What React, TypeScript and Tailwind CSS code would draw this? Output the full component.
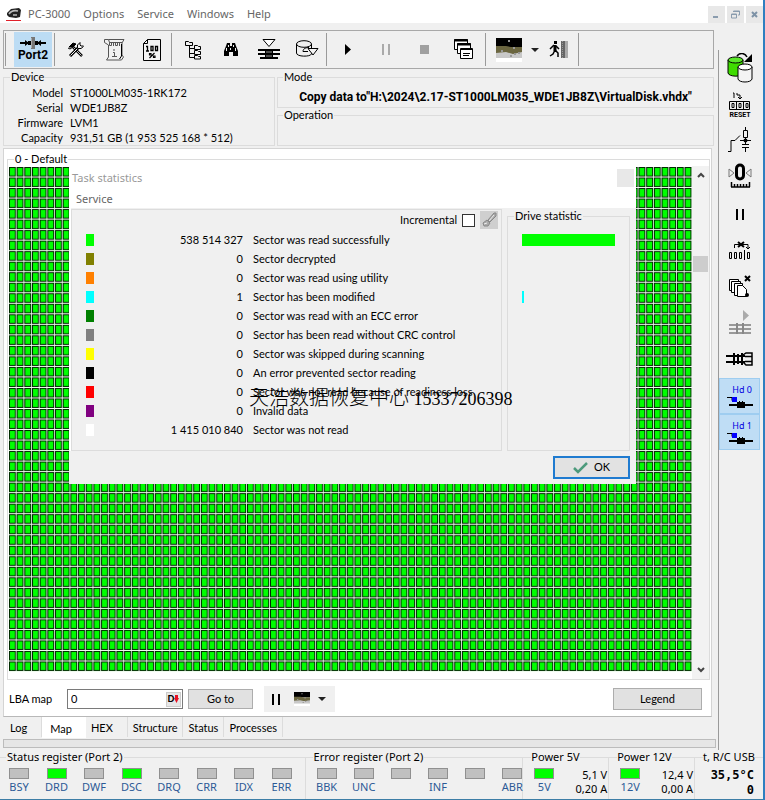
import type { ReactNode } from 'react';

// ============================================================
// PC-3000 — main window with sector map and task statistics
// ============================================================

interface SectorStat {
  color: string;
  count: string;
  label: string;
  bar: number;
}

const SECTOR_STATS: SectorStat[] = [
  { color: 'bg-[#00ff00]', count: '538 514 327', label: 'Sector was read successfully', bar: 93 },
  { color: 'bg-[#808000]', count: '0', label: 'Sector decrypted', bar: 0 },
  { color: 'bg-[#ff8000]', count: '0', label: 'Sector was read using utility', bar: 0 },
  { color: 'bg-[#00ffff]', count: '1', label: 'Sector has been modified', bar: 2 },
  { color: 'bg-[#008000]', count: '0', label: 'Sector was read with an ECC error', bar: 0 },
  { color: 'bg-[#808080]', count: '0', label: 'Sector has been read without CRC control', bar: 0 },
  { color: 'bg-[#ffff00]', count: '0', label: 'Sector was skipped during scanning', bar: 0 },
  { color: 'bg-black', count: '0', label: 'An error prevented sector reading', bar: 0 },
  { color: 'bg-[#ff0000]', count: '0', label: 'Sector was not read because of readiness loss', bar: 0 },
  { color: 'bg-[#800080]', count: '0', label: 'Invalid data', bar: 0 },
  { color: 'bg-white', count: '1 415 010 840', label: 'Sector was not read', bar: 0 },
];

const DEVICE = [
  ['Model', 'ST1000LM035-1RK172'],
  ['Serial', 'WDE1JB8Z'],
  ['Firmware', 'LVM1'],
  ['Capacity', '931,51 GB (1 953 525 168 * 512)'],
];

const STATUS_BITS = ['BSY', 'DRD', 'DWF', 'DSC', 'DRQ', 'CRR', 'IDX', 'ERR'];
const ERROR_BITS = ['BBK', 'UNC', '', 'INF', '', 'ABR'];
const ACTIVE_BITS = ['DRD', 'DSC'];
const TABS = ['Log', 'Map', 'HEX', 'Structure', 'Status', 'Processes'];

// ---------- Icons ----------

function Icon({ w, h, children }: { w: number; h: number; children: ReactNode }) {
  return (
    <svg width={w} height={h} viewBox={`0 0 ${w} ${h}`} fill="none" stroke="#000" className="block shrink-0" aria-hidden="true">
      {children}
    </svg>
  );
}

const LogoIcon = () => (
  <Icon w={16} h={15}>
    <path d="M1 6 5 2l8-1 2 2-1 7-4 1-7-1-2-2z" fill="#222" stroke="none" />
    <path d="M3 7c2-3 5-4 9-3M7 8h4" stroke="#bbb" strokeWidth="1.500" />
    <path d="M0 13.500h15" stroke="#e0202a" />
  </Icon>
);

const PortIcon = () => (
  <Icon w={26} h={12}>
    <path d="M0 6h26" strokeWidth="2" />
    <path d="M5 3l4 3-4 3zM21 3l-4 3 4 3z" fill="#000" stroke="none" />
    <path d="M8 6h4M14 6h4" strokeWidth="4" />
    <path d="M11 0h4v12h-4z" fill="#777" stroke="none" />
    <path d="M11.500 1v10" stroke="#aaa" />
  </Icon>
);

const ToolsIcon = () => (
  <Icon w={16} h={15}>
    <path d="M1 5l4-4 3 1-3 3z" fill="#000" />
    <path d="M0 6l2 1 3-2" />
    <path d="M5 5l9 9" strokeWidth="2.500" />
    <path d="M5.500 5.500l8 8" stroke="#f0f0f0" strokeWidth=".8" />
    <path d="M10 6L2 14" strokeWidth="3" />
    <path d="M10 6L2.500 13.500" stroke="#f0f0f0" />
    <path d="M12 .5L9.500 3v3.500H13l2.500-2M12 .5V3l1 1h2.500" />
  </Icon>
);

const ScriptIcon = () => (
  <Icon w={21} h={23}>
    <path d="M4.500 1.500H20l-2 3.500v12l1.500 2-2 3H2.500l2-3V7L.5 4.500v-3h4l1 3H18" fill="#f0f0f0" stroke="#555" />
    <path d="M17.500 6v12l-2 3" />
    <path d="M5.500 4.500h2v3h-2zM11.500 4.500h2v3h-2zM9.500 4v4M15.500 4v4M10 11v2M9 14.500h1.500v4M8 18.500h5" stroke="#555" />
  </Icon>
);

const PercentIcon = () => (
  <Icon w={18} h={22}>
    <path d="M4.500.5h13v21H.5v-17z" fill="#f4f4f4" />
    <path d="M.5 4.500h4v-4" />
    <path d="M3 7.500h1.500V12M3 12h3M8 7.500h2v4H8zM12.500 7.500h2v4h-2z" strokeWidth="1.300" />
    <path d="M11.500 14l-5 5M6.500 14.500H8V16H6.500zM10.500 17H12v1.500h-1.500z" strokeWidth="1.200" />
  </Icon>
);

const TreeIcon = () => (
  <Icon w={17} h={20}>
    <path d="M.5 1.500h3l1 1h3v3h-7zM9.500 5.500h3l1 1h2v3h-6zM9.500 10.500h3l1 1h2v3h-6zM9.500 15.500h3l1 1h2v2.500h-6z" />
    <path d="M4.500 6v11.500h5M4.500 8.500h5M4.500 13.500h5" />
  </Icon>
);

const BinocularsIcon = () => (
  <Icon w={16} h={13}>
    <path d="M4 0h3v3h2V0h3l1 3 2 5v5h-5V9H6v4H1V8l2-5z" fill="#000" stroke="none" />
    <path d="M3.500 5v3M12.500 5v3M5.500 2v2M10.500 2v2M7.500 5v2" stroke="#eee" />
  </Icon>
);

const HeadsIcon = () => (
  <Icon w={22} h={21}>
    <path d="M5 .5h12l-6 7z" fill="#fff" />
    <path d="M0 11h22M0 15h22M2 19h18" strokeWidth="2" />
    <path d="M7 10h8v10H7z" fill="#000" stroke="none" />
    <path d="M8 13h6M8 17h6" stroke="#999" />
  </Icon>
);

const DiskArrowIcon = () => (
  <Icon w={23} h={19}>
    <path d="M.5 4v9c0 4 14 4 15 1V4" />
    <ellipse cx="8" cy="4" rx="7.500" ry="3.300" />
    <path d="M7 11.500c0-3 3-4 6-4M7 11.500h5" />
    <path d="M12 8.500h10l-5 6.500z" fill="#f4f4f4" />
  </Icon>
);

const CascadeIcon = () => (
  <Icon w={20} h={21}>
    <path d="M.5.5h13v10H.5z" fill="#fff" />
    <path d="M0 1.500h14" strokeWidth="2" />
    <path d="M3.500 4.500h13v10h-13z" fill="#fff" />
    <path d="M3 5.500h14" strokeWidth="2" />
    <path d="M6.500 9.500h12v10h-12z" fill="#fff" />
    <path d="M6 10.500h13M9 14.500h7M9 16.500h6" />
  </Icon>
);

const SceneIcon = ({ size = 26 }: { size?: number }) => (
  <svg width={size} height={size - 2} viewBox="0 0 26 24" preserveAspectRatio="none" className="block shrink-0" aria-hidden="true">
    <path d="M0 0h26v9H0z" fill="#000" />
    <path d="M0 8h10l5 1h11v7H0z" fill="#6b6640" />
    <path d="M0 15l10-1 7 2 9-2v6H0z" fill="#c8c8c8" />
    <path d="M0 20h26v4H0z" fill="#fff" />
    <path d="M12 2h2v2h-2zM5 12h2v2H5zM18 15h2v2h-2zM22 14h2v2h-2zM14 17h2v2h-2zM17 9h2v2h-2z" fill="#999" />
  </svg>
);

const ExitIcon = () => (
  <Icon w={20} h={17}>
    <path d="M5 0h3v3H5z" fill="#000" stroke="none" />
    <path d="M6 4v6" strokeWidth="3" />
    <path d="M5 4l-4 4M7 5l3 3M6 9l-2 4-3 2M6 9l3 3v4" strokeWidth="1.500" />
    <path d="M12 0h4v17h-4z" fill="#666" stroke="none" />
    <path d="M16 0h3v17h-3z" fill="#aaa" stroke="none" />
    <path d="M13.500 0v17" strokeDasharray="1 1" stroke="#999" />
  </Icon>
);

const Caret = () => (
  <Icon w={8} h={4}>
    <path d="M0 0h8L4 4z" fill="#222" stroke="none" />
  </Icon>
);

const PauseIcon = ({ color = '#000' }: { color?: string }) => (
  <Icon w={8} h={11}>
    <path d="M1 0v11M7 0v11" stroke={color} strokeWidth="2" />
  </Icon>
);

const CopyDisksIcon = () => (
  <Icon w={26} h={30}>
    <path d="M1 7v13c1 4 13 4 15 1V7" fill="#3fdc00" />
    <ellipse cx="8.500" cy="7" rx="7.500" ry="3" fill="#5be82a" />
    <path d="M10 3c3-4 8-3 10 1" strokeWidth="1.500" />
    <path d="M25 1v8h-8z" fill="#000" stroke="none" />
    <path d="M11 14v12c1 4 13 4 14 0V14" fill="#f4f4f4" />
    <ellipse cx="18" cy="14" rx="7" ry="3" fill="#fff" />
  </Icon>
);

const ResetIcon = () => (
  <Icon w={22} h={27}>
    <path d="M4 2h1v5M8 2v2h3v4M9 6l2 2 2-2" />
    <path d="M.5 10.500h20v8H.5zM7.500 10v9M14.500 10v9" />
    <path d="M3 12.500h2v4H3zM10 12.500h2v4h-2zM17 12.500h2v4h-2z" />
    <text x="11" y="26" textAnchor="middle" fontSize="7" fontWeight="700" fontFamily="Roboto, sans-serif" fill="#000" stroke="none">RESET</text>
  </Icon>
);

const SwitchIcon = () => (
  <Icon w={24} h={26}>
    <path d="M0 24.500h3V13.500h4l5-5M12 13.500h11M17.500 0v3M15.500 3.500h4v7h-4zM17.500 11v6M14 17.500h7M14 20.500h7M17.500 21v4" />
    <circle cx="17.500" cy="13.500" r="2" fill="#000" stroke="none" />
  </Icon>
);

const RulerIcon = () => (
  <Icon w={24} h={26}>
    <path d="M1 6l5 4-5 4zM23 6l-5 4 5 4z" stroke="#777" />
    <rect x="8.500" y="2" width="7" height="14" rx="3.500" strokeWidth="3" />
    <path d="M3 24h19M3.500 19v5M6.500 21v3M9.500 21v3M12.500 21v3M15.500 21v3M18.500 21v3M21.500 19v5" strokeWidth="1.500" />
  </Icon>
);

const SkipIcon = () => (
  <Icon w={23} h={19}>
    <path d="M6.500 7V3.500H20V8M18 6l2 2 2-2" />
    <path d="M10 1l6 5M16 1l-6 5" strokeWidth="2" />
    <path d="M1.500 11.500h2v6h-2zM6.500 11.500h2v6h-2zM11.500 11.500h2v6h-2zM16.500 9v10M19.500 11.500h2v6h-2z" />
  </Icon>
);

const PagesIcon = () => (
  <Icon w={22} h={23}>
    <path d="M.5 4.500h9v11h-9z" fill="#fff" />
    <path d="M2.500 6.500h9v11h-9z" fill="#fff" />
    <path d="M5.500 8.500h8v12h-8z" fill="#fff" />
    <path d="M8.500 10.500h5l4 4v7h-9z" fill="#fff" />
    <path d="M16 1l5 5M21 1l-5 5" strokeWidth="2" />
    <circle cx="18" cy="20" r="2" fill="#000" stroke="none" />
  </Icon>
);

const PlayHeadsIcon = () => (
  <Icon w={22} h={26}>
    <path d="M14 1v11l6-5.500z" fill="#aaa" stroke="none" />
    <path d="M0 16h22M0 20h22M0 24h22" stroke="#999" strokeWidth="2" />
    <path d="M7 14h2v11H7zM13 14h2v11h-2z" fill="#888" stroke="none" />
  </Icon>
);

const HeadStackIcon = () => (
  <Icon w={27} h={15}>
    <path d="M0 5h19M0 11h19" strokeWidth="2" />
    <path d="M8 2v12M12 3v10M16 2v12" strokeWidth="2" />
    <path d="M17 4l3-2h6v12h-6l-3-3M19 5.500h7M19 10.500h7" strokeWidth="1.500" />
  </Icon>
);

const HdIcon = () => (
  <Icon w={26} h={12}>
    <path d="M0 1.500h5v3" />
    <path d="M5 1h5v5H5z" fill="#0000ff" stroke="none" />
    <path d="M2 9h24" strokeWidth="2" />
    <path d="M10 6h8v6h-8z" fill="#000" stroke="none" />
    <path d="M12.500 5v7M15.500 5v7" />
  </Icon>
);

// ---------- Small shared parts ----------

function ToolButton({ label, width = 'w-[38px]', children }: { label: string; width?: string; children: ReactNode }) {
  return (
    <button type="button" aria-label={label} className={`flex ${width} items-center justify-center`}>
      {children}
    </button>
  );
}

const Separator = () => <div className="my-[2px] mr-[2px] w-px bg-[#9a9a9a]" />;

function Led({ label, on }: { label: string; on: boolean }) {
  return (
    <div className="flex w-5 flex-col items-center">
      <div className={`h-[11px] w-5 border border-[#909090] ${on ? 'bg-[#00ff00]' : 'bg-[#c0c0c0]'}`} />
      <span className="mt-px h-[14px] leading-[14px] text-[#2c5a96]">{label}</span>
    </div>
  );
}

function PowerGroup({ name, label, volts, amps }: { name: string; label: string; volts: string; amps: string }) {
  return (
    <fieldset className="min-w-0 border-t border-r border-[#dcdcdc]">
      <legend className="ml-[8px] h-[14px] leading-[14px] whitespace-nowrap">{name}</legend>
      <div className="flex justify-between pt-[4px] pr-px pl-[11px]">
        <Led label={label} on />
        <div className="text-right leading-[14px]">
          <div>{volts}</div>
          <div>{amps}</div>
        </div>
      </div>
    </fieldset>
  );
}

// ---------- Sections ----------

function MenuBar() {
  return (
    <header className="flex h-[23px] items-end justify-between bg-white font-['Noto_Sans',sans-serif] text-[11px] text-[#666]">
      <nav className="flex items-center gap-[13px] pl-[6px] leading-[18px]">
        <div className="flex items-center gap-[6px]">
          <LogoIcon />
          <span>PC-3000</span>
        </div>
        {['Options', 'Service', 'Windows', 'Help'].map(item => (
          <button key={item} type="button">{item}</button>
        ))}
      </nav>
      <div className="flex gap-[2px] text-[#7d92a6]">
        <button type="button" aria-label="Minimize" className="flex h-[17px] w-[17px] items-center justify-center bg-[#e8e8e8]">
          <Icon w={9} h={9}><path d="M1 7h5" stroke="#8a9cae" strokeWidth="2" /></Icon>
        </button>
        <button type="button" aria-label="Restore" className="flex h-[17px] w-[17px] items-center justify-center bg-[#e8e8e8]">
          <Icon w={9} h={9}><path d="M2.500 2V1h6v4H7M.5 4h5v4h-5zM2 1.500h6M.5 4.500h5" stroke="#8a9cae" /></Icon>
        </button>
        <button type="button" aria-label="Close" className="flex h-[17px] w-[17px] items-center justify-center bg-[#e8e8e8]">
          <Icon w={9} h={9}><path d="M2 2l5 5M7 2l-5 5" stroke="#7d92a6" strokeWidth="2" /></Icon>
        </button>
      </div>
    </header>
  );
}

function Toolbar() {
  return (
    <div className="mr-[4px] ml-[3px] flex h-[39px] border border-[#a8a8a8] pl-px" role="toolbar">
      <Separator />
      <button type="button" className="my-px mr-[2px] ml-[6px] flex w-[38px] flex-col items-center justify-center bg-[#bcdcf4] font-[Roboto,sans-serif] text-[12px] leading-[13px] font-bold">
        <PortIcon />
        Port2
      </button>
      <Separator />
      <ToolButton label="Settings"><ToolsIcon /></ToolButton>
      <ToolButton label="Script"><ScriptIcon /></ToolButton>
      <ToolButton label="Progress"><PercentIcon /></ToolButton>
      <Separator />
      <ToolButton label="Tree"><TreeIcon /></ToolButton>
      <ToolButton label="Search"><BinocularsIcon /></ToolButton>
      <ToolButton label="Heads"><HeadsIcon /></ToolButton>
      <ToolButton label="Disk"><DiskArrowIcon /></ToolButton>
      <Separator />
      <ToolButton label="Start">
        <Icon w={8} h={11}><path d="M1 0l6 5.500L1 11z" fill="#000" stroke="none" /></Icon>
      </ToolButton>
      <ToolButton label="Pause"><PauseIcon color="#aaa" /></ToolButton>
      <ToolButton label="Stop">
        <Icon w={9} h={9}><path d="M0 0h9v9H0z" fill="#a0a0a0" stroke="none" /></Icon>
      </ToolButton>
      <ToolButton label="Windows" width="w-[42px]"><CascadeIcon /></ToolButton>
      <Separator />
      <ToolButton label="Map view" width="w-[42px]"><SceneIcon /></ToolButton>
      <ToolButton label="Map view options" width="w-[10px]"><Caret /></ToolButton>
      <ToolButton label="Exit"><ExitIcon /></ToolButton>
      <Separator />
    </div>
  );
}

function InfoPanel() {
  return (
    <div className="mt-px mr-[4px] ml-[3px] flex h-[76px] gap-[2px]">
      <fieldset className="w-[272px] min-w-0 border border-[#dcdcdc]">
        <legend className="ml-[6px] h-[14px] px-px leading-[14px]">Device</legend>
        <dl className="grid grid-cols-[59px_1fr] gap-x-[7px] pt-px leading-[15px] whitespace-nowrap">
          {DEVICE.map(([name, value]) => (
            <div key={name} className="contents">
              <dt className="text-right">{name}</dt>
              <dd>{value}</dd>
            </div>
          ))}
        </dl>
      </fieldset>
      <div className="flex min-w-0 flex-1 flex-col">
        <fieldset className="h-[38px] min-w-0 border border-[#dcdcdc]">
          <legend className="ml-[5px] h-[14px] px-px leading-[14px]">Mode</legend>
          <p className="pt-[4px] text-center font-[Roboto,sans-serif] text-[12px] leading-[18px] font-bold whitespace-nowrap">
            Copy data to"H:\2024\2.17-ST1000LM035_WDE1JB8Z\VirtualDisk.vhdx"
          </p>
        </fieldset>
        <fieldset className="min-w-0 flex-1 border border-[#dcdcdc]">
          <legend className="ml-[5px] h-[14px] px-px leading-[14px]">Operation</legend>
        </fieldset>
      </div>
    </div>
  );
}

// Every cell stands for one block of sectors
function SectorMap() {
  return (
    <svg viewBox="0 0 685 504" preserveAspectRatio="none" className="block min-h-[505px] w-full flex-1" role="img" aria-label="Sector map">
      <defs>
        <pattern id="cell" width="7.700" height="10.500" patternUnits="userSpaceOnUse">
          <rect width="7.700" height="10.500" fill="#f4fff4" />
          <rect width="6.900" height="9.500" fill="#002800" />
          <rect x="1" y="1" width="4.900" height="7.500" fill="#00ff00" />
        </pattern>
      </defs>
      <rect width="685" height="504" fill="url(#cell)" />
    </svg>
  );
}

function TaskStatistics() {
  return (
    <div role="dialog" aria-label="Task statistics" className="absolute top-0 right-[56px] left-[60px] bg-[#f0f0f0]">
      <div className="flex h-6 items-center justify-between bg-white pl-[3px] font-['Noto_Sans',sans-serif] text-[11px] text-[#999]">
        <span>Task statistics</span>
        <button type="button" aria-label="Close" className="mr-[2px] h-[18px] w-[17px] bg-[#e8e8e8]" />
      </div>
      <div className="h-[18px] bg-white pl-[7px] font-['Noto_Sans',sans-serif] text-[11px] leading-[18px] text-[#666]">
        <button type="button">Service</button>
      </div>
      <div className="flex h-[243px] gap-[5px] border-l-2 border-white pt-px pr-[6px]">
        <div className="min-w-0 flex-1 border border-[#dcdcdc]">
          <div className="flex h-5 items-center justify-end gap-[5px] pr-[3px]">
            <label htmlFor="incremental">Incremental</label>
            <input id="incremental" type="checkbox" className="h-[13px] w-[13px] appearance-none border border-[#333] bg-white" />
            <button type="button" aria-label="Clear" className="flex h-[18px] w-[18px] items-center justify-center bg-[#cfcfcf]">
              <Icon w={16} h={16}>
                <path d="M15 1h-2L7 8l2 2 6-6zM6 8l-4 3 1 3h4l2-3z" fill="#aaa" stroke="#888" />
                <path d="M8 9l5-6M3 12l3-1" stroke="#eee" />
              </Icon>
            </button>
          </div>
          <table className="w-full">
            <tbody>
              {SECTOR_STATS.map(stat => (
                <tr key={stat.label} className="h-[19px] leading-[19px] whitespace-nowrap">
                  <td className="w-[30px] pl-[14px]">
                    <div className={`h-3 w-2 ${stat.color}`} />
                  </td>
                  <td className="w-[151px] pr-[10px] text-right">{stat.count}</td>
                  <td>{stat.label}</td>
                </tr>
              ))}
            </tbody>
          </table>
        </div>
        <fieldset className="w-[123px] min-w-0 border border-[#dcdcdc]">
          <legend className="ml-[6px] h-[14px] px-px leading-[14px]">Drive statistic</legend>
          <div className="pt-[7px] pl-[14px]">
            {SECTOR_STATS.map(stat => (
              <div key={stat.label} className="flex h-[19px] items-center">
                <div className={`h-3 ${stat.color}`} style={{ width: stat.bar }} />
              </div>
            ))}
          </div>
        </fieldset>
      </div>
      <div className="flex justify-end pt-[5px] pr-[6px] pb-[5px]">
        <button type="button" className="flex h-[23px] w-[77px] items-center justify-center gap-[6px] border-2 border-[#1f7bd0] bg-[#e2e2e2]">
          <Icon w={15} h={12}>
            <path d="M1 6l4 4 9-9" stroke="#4d9a7c" strokeWidth="2.500" />
          </Icon>
          OK
        </button>
      </div>
    </div>
  );
}

function MapPanel() {
  return (
    <section className="mt-[2px] mr-[6px] ml-[3px] flex flex-1 flex-col border border-[#d4d4d4] border-b-[#b8b8b8] bg-white pt-[3px]">
      <fieldset className="mr-px ml-[3px] flex min-w-0 flex-1 flex-col border border-[#dcdcdc] pl-px">
        <legend className="ml-[5px] h-[14px] px-px leading-[14px]">0 - Default</legend>
        <div className="flex flex-1">
          <div className="relative flex min-w-0 flex-1 flex-col pt-px pb-[7px]">
            <SectorMap />
            <TaskStatistics />
            <p className="absolute top-[218px] left-[240px] font-['Liberation_Serif','Noto_Sans_CJK_SC',serif] text-[18px] leading-[28px] whitespace-nowrap">
              <span className="text-[20px] font-light">天浩数据恢复中心</span> 15337206398
            </p>
          </div>
          <div className="flex w-[17px] flex-col bg-[#f2f2f2] px-px">
            <button type="button" aria-label="Scroll up" className="flex h-[18px] items-center justify-center">
              <Icon w={8} h={6}><path d="M1 5l3-3 3 3" stroke="#444" strokeWidth="2" /></Icon>
            </button>
            <div className="flex-[18]" />
            <div className="h-4 bg-[#cdcdcd]" />
            <div className="flex-[98]" />
            <button type="button" aria-label="Scroll down" className="flex h-[18px] items-center justify-center">
              <Icon w={8} h={6}><path d="M1 1l3 3 3-3" stroke="#444" strokeWidth="2" /></Icon>
            </button>
          </div>
        </div>
      </fieldset>
      <div className="flex h-[36px] items-center pt-[2px] pr-[9px] pl-[5px]">
        <label htmlFor="lba" className="w-[58px]">LBA map</label>
        <div className="flex h-5 w-[116px] items-center border border-[#7a7a7a] bg-white pr-px">
          <input id="lba" type="text" defaultValue="0" className="min-w-0 flex-1 px-[3px] outline-none" />
          <button type="button" aria-label="Decimal" className="flex h-[15px] w-[15px] items-center justify-center border border-[#ccc] bg-[#e6e6e6] text-[9px] font-black">
            D
            <Icon w={5} h={8}><path d="M1 0h3v3h1L2.500 8 0 3h1z" fill="#e81123" stroke="none" /></Icon>
          </button>
        </div>
        <button type="button" className="ml-[5px] h-5 w-[65px] border border-[#adadad] bg-[#e1e1e1]">Go to</button>
        <div className="ml-[11px] flex h-[26px] w-[71px] items-center gap-[14px] bg-[#f0f0f0] pl-[8px]">
          <button type="button" aria-label="Pause map"><PauseIcon /></button>
          <button type="button" aria-label="Map view" className="flex items-center gap-[8px]">
            <SceneIcon size={16} />
            <Caret />
          </button>
        </div>
        <button type="button" className="ml-auto h-[22px] w-[89px] border border-[#adadad] bg-[#e1e1e1]">Legend</button>
      </div>
    </section>
  );
}

function BottomTabs() {
  return (
    <>
      <div className="ml-[5px] flex h-[21px]" role="tablist">
        {TABS.map(tab => (
          <button
            key={tab}
            type="button"
            role="tab"
            aria-selected={tab === 'Map'}
            className={
              tab === 'Map'
                ? 'bg-white px-[8px] pt-[4px] pr-[14px]'
                : `mb-px border-r border-[#dcdcdc] pt-[2px] pl-[5px] ${tab.length > 3 ? 'pr-[5px]' : 'pr-[14px]'}`
            }
          >
            {tab}
          </button>
        ))}
      </div>
      <div className="mt-px mr-[2px] mb-[2px] ml-[3px] h-[9px] border border-[#bcbcbc] bg-[#e6e6e6]" />
    </>
  );
}

function SideBar() {
  return (
    <aside className="mt-[27px] flex w-[45px] flex-col items-center gap-[2px] border-l border-[#9a9a9a] pr-[3px]">
      <div className="flex flex-col">
        <button type="button" aria-label="Copy" className="flex h-9 items-center justify-center"><CopyDisksIcon /></button>
        <button type="button" className="flex h-9 items-center justify-center"><ResetIcon /></button>
        <button type="button" aria-label="Power switch" className="flex h-9 items-center justify-center"><SwitchIcon /></button>
        <button type="button" aria-label="Recalibrate" className="flex h-9 items-center justify-center"><RulerIcon /></button>
      </div>
      <div className="flex flex-col">
        <button type="button" aria-label="Pause" className="flex h-9 items-center justify-center"><PauseIcon /></button>
        <button type="button" aria-label="Skip" className="flex h-9 items-center justify-center"><SkipIcon /></button>
        <button type="button" aria-label="Pages" className="flex h-9 items-center justify-center"><PagesIcon /></button>
        <button type="button" aria-label="Start heads" className="flex h-9 items-center justify-center"><PlayHeadsIcon /></button>
        <button type="button" aria-label="Head stack" className="flex h-9 items-center justify-center"><HeadStackIcon /></button>
      </div>
      <div className="flex flex-col">
        {['Hd 0', 'Hd 1'].map(head => (
          <button key={head} type="button" className="flex h-9 w-[41px] flex-col items-center justify-center border border-[#9fcdf0] bg-[#bfddf5] font-['Noto_Sans',sans-serif] text-[9px] leading-[12px] text-[#0000e0]">
            <span className="self-end pr-[7px]">{head}</span>
            <HdIcon />
          </button>
        ))}
      </div>
    </aside>
  );
}

function RegisterBar() {
  return (
    <footer className="grid h-[50px] grid-cols-[306fr_218fr_86fr_86fr_68fr] border-b border-[#3d7ea6] font-['Noto_Sans',sans-serif] text-[11px]">
      <fieldset className="min-w-0 border-t border-r border-[#dcdcdc]">
        <legend className="ml-[6px] h-[14px] px-px leading-[14px]">Status register (Port 2)</legend>
        <div className="flex justify-between pt-[4px] pr-[13px] pl-[9px]">
          {STATUS_BITS.map(bit => <Led key={bit} label={bit} on={ACTIVE_BITS.includes(bit)} />)}
        </div>
      </fieldset>
      <fieldset className="min-w-0 border-t border-r border-[#dcdcdc]">
        <legend className="ml-[7px] h-[14px] px-px leading-[14px]">Error register (Port 2)</legend>
        <div className="flex justify-between pt-[4px] pl-[11px]">
          {ERROR_BITS.map((bit, i) => <Led key={i} label={bit} on={false} />)}
        </div>
      </fieldset>
      <PowerGroup name="Power 5V" label="5V" volts="5,1 V" amps="0,20 A" />
      <PowerGroup name="Power 12V" label="12V" volts="12,4 V" amps="0,00 A" />
      <fieldset className="min-w-0 border-t border-[#dcdcdc]">
        <legend className="ml-[8px] h-[14px] leading-[14px] whitespace-nowrap">t, R/C USB</legend>
        <div className="pt-[4px] pr-[9px] text-right font-['DejaVu_Sans_Mono',monospace] text-[12px] leading-[15px] font-bold">
          <div>35,5°C</div>
          <div>0</div>
        </div>
      </fieldset>
    </footer>
  );
}

export default function App() {
  return (
    <div className="flex min-h-screen flex-col border-r-2 border-[#2f7fc0] bg-[#f0f0f0] font-[Lato,sans-serif] text-[11px] text-black">
      <MenuBar />
      <div className="flex flex-1">
        <main className="flex min-w-0 flex-1 flex-col pt-[7px]">
          <Toolbar />
          <InfoPanel />
          <MapPanel />
          <BottomTabs />
        </main>
        <SideBar />
      </div>
      <RegisterBar />
    </div>
  );
}
